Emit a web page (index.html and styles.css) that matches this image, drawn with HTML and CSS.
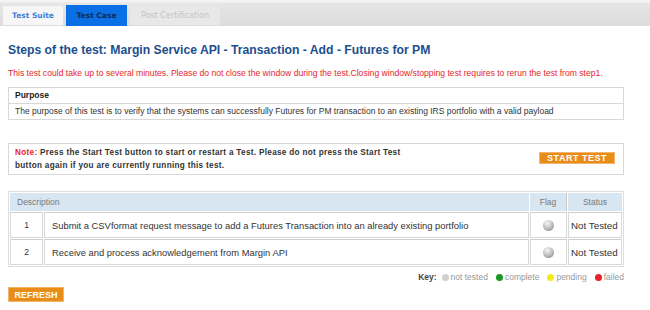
FILE: index.html
```html
<!DOCTYPE html>
<html>
<head>
<meta charset="utf-8">
<link rel="stylesheet" href="styles.css">
</head>
<body>
<div class="tabbar">
  <div class="tab tab-suite">Test Suite</div>
  <div class="tab tab-case">Test Case</div>
  <div class="tab tab-post">Post Certification</div>
</div>
<div class="content">
  <h1 class="title">Steps of the test: Margin Service API - Transaction - Add - Futures for PM</h1>
  <p class="warn">This test could take up to several minutes. Please do not close the window during the test.Closing window/stopping test requires to rerun the test from step1.</p>
  <div class="box purpose">
    <div class="purpose-head">Purpose</div>
    <div class="purpose-body">The purpose of this test is to verify that the systems can successfully Futures for PM transaction to an existing IRS portfolio with a valid payload</div>
  </div>
  <div class="box note">
    <p class="note-text"><span class="red">Note:</span> Press the Start Test button to start or restart a Test. Please do not press the Start Test button again if you are currently running this test.</p>
    <button class="btn btn-start">START TEST</button>
  </div>
  <table class="steps">
    <thead>
      <tr><th colspan="2" class="th-desc">Description</th><th class="th-flag">Flag</th><th class="th-status">Status</th></tr>
    </thead>
    <tbody>
      <tr><td class="num">1</td><td class="desc">Submit a CSVformat request message to add a Futures Transaction into an already existing portfolio</td><td class="flag"><span class="ball"></span></td><td class="status">Not Tested</td></tr>
      <tr><td class="num">2</td><td class="desc">Receive and process acknowledgement from Margin API</td><td class="flag"><span class="ball"></span></td><td class="status">Not Tested</td></tr>
    </tbody>
  </table>
  <div class="key">
    <span class="key-label">Key:</span>
    <span class="dot dot-gray"></span><span class="key-item">not tested</span>
    <span class="dot dot-green"></span><span class="key-item">complete</span>
    <span class="dot dot-yellow"></span><span class="key-item">pending</span>
    <span class="dot dot-red"></span><span class="key-item">failed</span>
  </div>
  <button class="btn btn-refresh">REFRESH</button>
</div>
</body>
</html>
```
FILE: styles.css
```css
html, body {
  margin: 0;
  padding: 0;
  background: #fff;
}
body {
  font-family: "Liberation Sans", Arial, sans-serif;
  color: #333;
  width: 650px;
  height: 310px;
  overflow: hidden;
}
.tabbar {
  display: flex;
  align-items: flex-end;
  gap: 3px;
  height: 26px;
  padding-left: 3px;
  background: linear-gradient(#f4f4f4 0, #f4f4f4 2px, #e6e6e6 3px, #dcdcdc 100%);
  box-sizing: border-box;
}
.tab {
  font-family: "DejaVu Sans", Verdana, sans-serif;
  font-weight: bold;
  font-size: 7.5px;
  height: 19px;
  line-height: 19px;
  text-align: center;
  margin-bottom: 1px;
}
.tab-suite {
  width: 60px;
  background: #f6f6f6;
  color: #3d7fd6;
}
.tab-case {
  width: 61px;
  height: 21px;
  line-height: 21px;
  margin-bottom: 0;
  background: #0b6fe6;
  color: #0d2a55;
}
.tab-post {
  width: 90px;
  background: #e8e8e8;
  color: #c4c4c4;
  font-weight: normal;
  font-size: 8px;
}
.content {
  padding: 0 26px 0 8px;
}
.title {
  margin: 17px 0 0;
  font-size: 12.2px;
  line-height: 14px;
  font-weight: bold;
  color: #1d4f8e;
}
.warn {
  margin: 11px 0 0;
  font-size: 8.6px;
  line-height: 11px;
  color: #e4262c;
  white-space: nowrap;
}
.box {
  border: 1px solid #d8d8d8;
  box-sizing: border-box;
}
.purpose {
  margin-top: 8px;
  height: 33px;
  font-size: 8.5px;
}
.purpose-head {
  font-weight: bold;
  padding: 0 6px;
  height: 15px;
  line-height: 15px;
  border-bottom: 1px solid #d8d8d8;
  color: #222;
}
.purpose-body {
  padding: 0 6px;
  line-height: 15px;
  color: #333;
}
.note {
  margin-top: 23px;
  height: 32px;
  display: flex;
  align-items: center;
  justify-content: space-between;
  padding: 0 8px 0 6px;
}
.note-text {
  margin: 0;
  width: 400px;
  font-weight: bold;
  font-size: 8.2px;
  line-height: 13px;
  letter-spacing: 0.3px;
  color: #333;
}
.red {
  color: #e4262c;
}
.btn {
  font-family: "Liberation Sans", Arial, sans-serif;
  font-weight: bold;
  color: #fff;
  background: #e88d1a;
  border: 1px solid #f3b56a;
  padding: 0;
  height: 12px;
  font-size: 9px;
  line-height: 10px;
  letter-spacing: 0.5px;
}
.btn-start {
  width: 76px;
  margin-top: -2px;
}
.steps {
  margin-top: 16px;
  width: 616px;
  border-collapse: separate;
  border-spacing: 1px;
  border: 1px solid #dedede;
  font-size: 9.4px;
  color: #333;
}
.steps th {
  background: #d7e6f0;
  color: #7a7a7a;
  font-weight: normal;
  height: 18px;
  padding: 0;
  font-size: 8.5px;
}
.th-desc {
  text-align: left;
  padding-left: 7px !important;
}
.th-flag {
  width: 36px;
  border-right: 1px solid #c8c8c8;
}
.th-status {
  width: 54px;
}
.steps td {
  height: 24px;
  padding: 0;
  border: 1px solid #d8d8d8;
  border-top-color: #cfcfcf;
}
.num {
  width: 31px;
  text-align: center;
  font-size: 8.5px;
}
.desc {
  padding-left: 7px !important;
}
.flag {
  text-align: center;
}
.status {
  text-align: left;
  padding-left: 2px !important;
  font-size: 9.8px;
  color: #333;
}
.ball {
  display: inline-block;
  width: 11px;
  height: 11px;
  border-radius: 50%;
  background: radial-gradient(circle at 40% 30%, #f6f6f6 0, #c4c4c4 45%, #808080 100%);
  vertical-align: middle;
}
.key {
  display: flex;
  justify-content: flex-end;
  align-items: center;
  gap: 2px;
  margin-top: 3px;
  height: 14px;
  font-size: 8.5px;
  color: #999;
}
.key-label {
  font-weight: bold;
  color: #444;
  margin-right: 3px;
}
.key-item {
  margin-right: 6px;
}
.key-item:last-child {
  margin-right: 0;
}
.dot {
  display: inline-block;
  width: 7px;
  height: 7px;
  border-radius: 50%;
}
.dot-gray { background: #cfcfcf; }
.dot-green { background: #1a9a22; }
.dot-yellow { background: #f3ea1c; }
.dot-red { background: #e8202a; }
.btn-refresh {
  display: block;
  margin-top: 3px;
  width: 56px;
  height: 15px;
  font-size: 9px;
  letter-spacing: 0;
}
```
